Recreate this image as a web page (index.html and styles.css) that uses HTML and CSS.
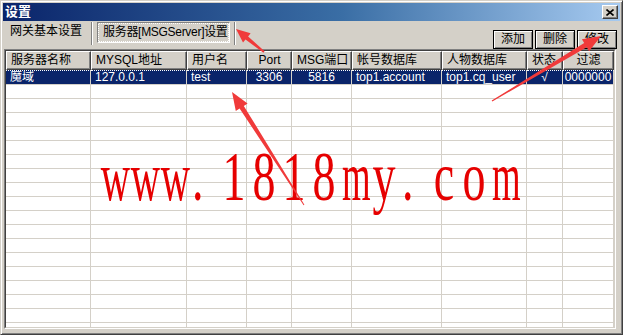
FILE: index.html
```html
<!DOCTYPE html>
<html lang="zh-CN">
<head>
    <meta charset="UTF-8">
    <title>设置</title>
    <link rel="stylesheet" href="styles.css">
</head>
<body>
    <div class="window">
        <div class="titlebar">
            <span class="title">设置</span>
            <span class="close">
                <svg width="8" height="7" viewBox="0 0 8 7"><path d="M0.5 0.5L7.5 6.5M7.5 0.5L0.5 6.5" stroke="#000" stroke-width="1.6"/></svg>
            </span>
        </div>

        <div class="toolbar">
            <span class="tab">网关基本设置</span>
            <span class="sep"></span>
            <span class="tab active"><span class="tab-face">服务器[MSGServer]设置</span></span>
            <span class="sep"></span>
            <div class="actions">
                <button>添加</button>
                <button>删除</button>
                <button>修改</button>
            </div>
        </div>

        <div class="grid">
            <div class="grid-inner">
                <table>
                    <colgroup>
                        <col style="width:85px">
                        <col style="width:96px">
                        <col style="width:60px">
                        <col style="width:45px">
                        <col style="width:60px">
                        <col style="width:90px">
                        <col style="width:85px">
                        <col style="width:36px">
                        <col style="width:51px">
                    </colgroup>
                    <thead>
                        <tr>
                            <th>服务器名称</th>
                            <th>MYSQL地址</th>
                            <th>用户名</th>
                            <th class="c">Port</th>
                            <th class="c">MSG端口</th>
                            <th>帐号数据库</th>
                            <th>人物数据库</th>
                            <th>状态</th>
                            <th class="c">过滤</th>
                        </tr>
                    </thead>
                    <tbody>
                        <tr class="selected">
                            <td>魔域</td>
                            <td>127.0.0.1</td>
                            <td>test</td>
                            <td class="c">3306</td>
                            <td class="c">5816</td>
                            <td>top1.account</td>
                            <td>top1.cq_user</td>
                            <td class="c">√</td>
                            <td class="c">0000000</td>
                        </tr>
                        <tr><td></td><td></td><td></td><td></td><td></td><td></td><td></td><td></td><td></td></tr>
                        <tr><td></td><td></td><td></td><td></td><td></td><td></td><td></td><td></td><td></td></tr>
                        <tr><td></td><td></td><td></td><td></td><td></td><td></td><td></td><td></td><td></td></tr>
                        <tr><td></td><td></td><td></td><td></td><td></td><td></td><td></td><td></td><td></td></tr>
                        <tr><td></td><td></td><td></td><td></td><td></td><td></td><td></td><td></td><td></td></tr>
                        <tr><td></td><td></td><td></td><td></td><td></td><td></td><td></td><td></td><td></td></tr>
                        <tr><td></td><td></td><td></td><td></td><td></td><td></td><td></td><td></td><td></td></tr>
                        <tr><td></td><td></td><td></td><td></td><td></td><td></td><td></td><td></td><td></td></tr>
                        <tr><td></td><td></td><td></td><td></td><td></td><td></td><td></td><td></td><td></td></tr>
                        <tr><td></td><td></td><td></td><td></td><td></td><td></td><td></td><td></td><td></td></tr>
                        <tr><td></td><td></td><td></td><td></td><td></td><td></td><td></td><td></td><td></td></tr>
                        <tr><td></td><td></td><td></td><td></td><td></td><td></td><td></td><td></td><td></td></tr>
                        <tr><td></td><td></td><td></td><td></td><td></td><td></td><td></td><td></td><td></td></tr>
                        <tr><td></td><td></td><td></td><td></td><td></td><td></td><td></td><td></td><td></td></tr>
                        <tr><td></td><td></td><td></td><td></td><td></td><td></td><td></td><td></td><td></td></tr>
                        <tr><td></td><td></td><td></td><td></td><td></td><td></td><td></td><td></td><td></td></tr>
                        <tr><td></td><td></td><td></td><td></td><td></td><td></td><td></td><td></td><td></td></tr>
                        <tr><td></td><td></td><td></td><td></td><td></td><td></td><td></td><td></td><td></td></tr>
                    </tbody>
                </table>
            </div>
        </div>

        <!-- watermark: fixed 30px cells like a half-width SimSun string -->
        <div class="watermark"><span class="w">w</span><span class="w">w</span><span class="w">w</span><span class="dot">.</span><span>1</span><span>8</span><span>1</span><span>8</span><span class="m">m</span><span>y</span><span class="dot">.</span><span>c</span><span>o</span><span class="m">m</span></div>

        <!-- red annotation arrows drawn over the dialog -->
        <svg class="arrows" width="623" height="335" viewBox="0 0 623 335">
            <polygon points="264.6,51.2 248.1,36.4 250.6,33.3 236,29 243.0,42.5 245.5,39.4 263.4,52.8"/>
            <polygon points="304.4,204.7 243.8,105.9 247.6,103.4 232,92 235.8,111.0 239.6,108.5 303.6,205.3"/>
            <polygon points="492.3,101.4 586.8,47.3 589.1,51.2 601,36 581.9,39.2 584.2,43.1 491.7,100.6"/>
        </svg>
    </div>
</body>
</html>
```

FILE: styles.css
```css
body {
    margin: 0;
    background: #d4d0c8;
}
.window {
    position: relative;
    width: 623px;
    height: 335px;
    box-sizing: border-box;
    padding: 2px;
    background: #d4d0c8;
    border: 1px solid;
    border-color: #d4d0c8 #404040 #404040 #d4d0c8;
    box-shadow: inset 1px 1px #fff, inset -1px -1px #808080;
    font: 12px "Liberation Sans", "Noto Sans CJK SC", sans-serif;
    color: #000;
    overflow: hidden;
}
.titlebar {
    height: 18px;
    display: flex;
    align-items: center;
    justify-content: space-between;
    padding: 0 2px;
    background: linear-gradient(to right, #0a246a, #3a6ea5 55%, #a6caf0);
    color: #fff;
}
.title {
    font-weight: bold;
    font-size: 13px;
    line-height: 16px;
}
.close {
    width: 16px;
    height: 14px;
    box-sizing: border-box;
    display: flex;
    align-items: center;
    justify-content: center;
    background: #d4d0c8;
    border: 1px solid;
    border-color: #fff #404040 #404040 #fff;
    box-shadow: inset -1px -1px #808080;
}
.toolbar {
    height: 28px;
    display: flex;
    align-items: flex-start;
}
.tab {
    padding: 3px 9px 0 7px;
    line-height: 14px;
    white-space: nowrap;
}
.sep {
    width: 2px;
    height: 23px;
    margin-top: 1px;
    box-sizing: border-box;
    border-left: 1px solid #808080;
    border-right: 1px solid #fff;
}
.tab.active {
    margin: 1px 4px 0 4px;
    padding: 0;
    width: 133px;
    height: 21px;
    box-sizing: border-box;
    border: 1px solid;
    border-color: #808080 #fff #fff #808080;
    background: repeating-conic-gradient(#fff 0 25%, #d4d0c8 0 50%) 0 0 / 2px 2px;
    display: flex;
}
.tab-face {
    flex: 1;
    margin: 1px;
    padding-left: 4px;
    line-height: 17px;
    letter-spacing: -0.3px;
    background: #d4d0c8;
    overflow: hidden;
}
.actions {
    margin-left: auto;
    margin-right: 3px;
    align-self: flex-end;
    display: flex;
    gap: 2px;
}
button {
    width: 40px;
    height: 19px;
    padding: 0;
    font: inherit;
    line-height: 15px;
    color: #000;
    background: #d4d0c8;
    border: 1px solid #000;
    box-shadow: inset 1px 1px #fff, inset -1px -1px #808080;
}
.grid {
    height: 280px;
    margin: 0 4px 0 1px;
    box-sizing: border-box;
    border: 1px solid;
    border-color: #808080 #fff #fff #808080;
}
.grid-inner {
    height: 100%;
    box-sizing: border-box;
    border: 1px solid;
    border-color: #404040 #d4d0c8 #d4d0c8 #404040;
    background: #fff;
    overflow: hidden;
}
table {
    width: 608px;
    table-layout: fixed;
    border-collapse: separate;
    border-spacing: 0;
}
th {
    height: 19px;
    padding: 0 4px;
    box-sizing: border-box;
    font-weight: normal;
    text-align: left;
    line-height: 15px;
    white-space: nowrap;
    overflow: hidden;
    background: #d4d0c8;
    border: 1px solid;
    border-color: #fff #404040 #404040 #fff;
    box-shadow: inset -1px -1px #808080;
}
td {
    height: 14px;
    padding: 0 4px;
    box-sizing: border-box;
    line-height: 13px;
    white-space: nowrap;
    overflow: hidden;
    border-top: 1px solid #d4d0c8;
    border-right: 1px solid #d4d0c8;
}
.c {
    text-align: center;
}
td.c {
    padding: 0;
}
.selected td {
    background: #0a246a;
    color: #fff;
    border-top: 1px dotted #fff;
}
.watermark {
    position: absolute;
    left: 98px;
    top: 141px;
    display: flex;
    font: 46px "Liberation Serif", serif;
    line-height: 1;
    color: #e60000;
    transform: scaleY(1.52);
    transform-origin: top left;
    white-space: nowrap;
}
.watermark span {
    width: 30px;
    text-align: center;
}
.watermark .w {
    transform: scaleX(0.88);
}
.watermark .m {
    transform: scaleX(0.8);
}
.watermark .dot {
    text-align: left;
    padding-left: 3px;
    box-sizing: border-box;
}
.arrows {
    position: absolute;
    left: -1px;
    top: -1px;
    pointer-events: none;
}
.arrows polygon {
    fill: #f03a3a;
}
```
